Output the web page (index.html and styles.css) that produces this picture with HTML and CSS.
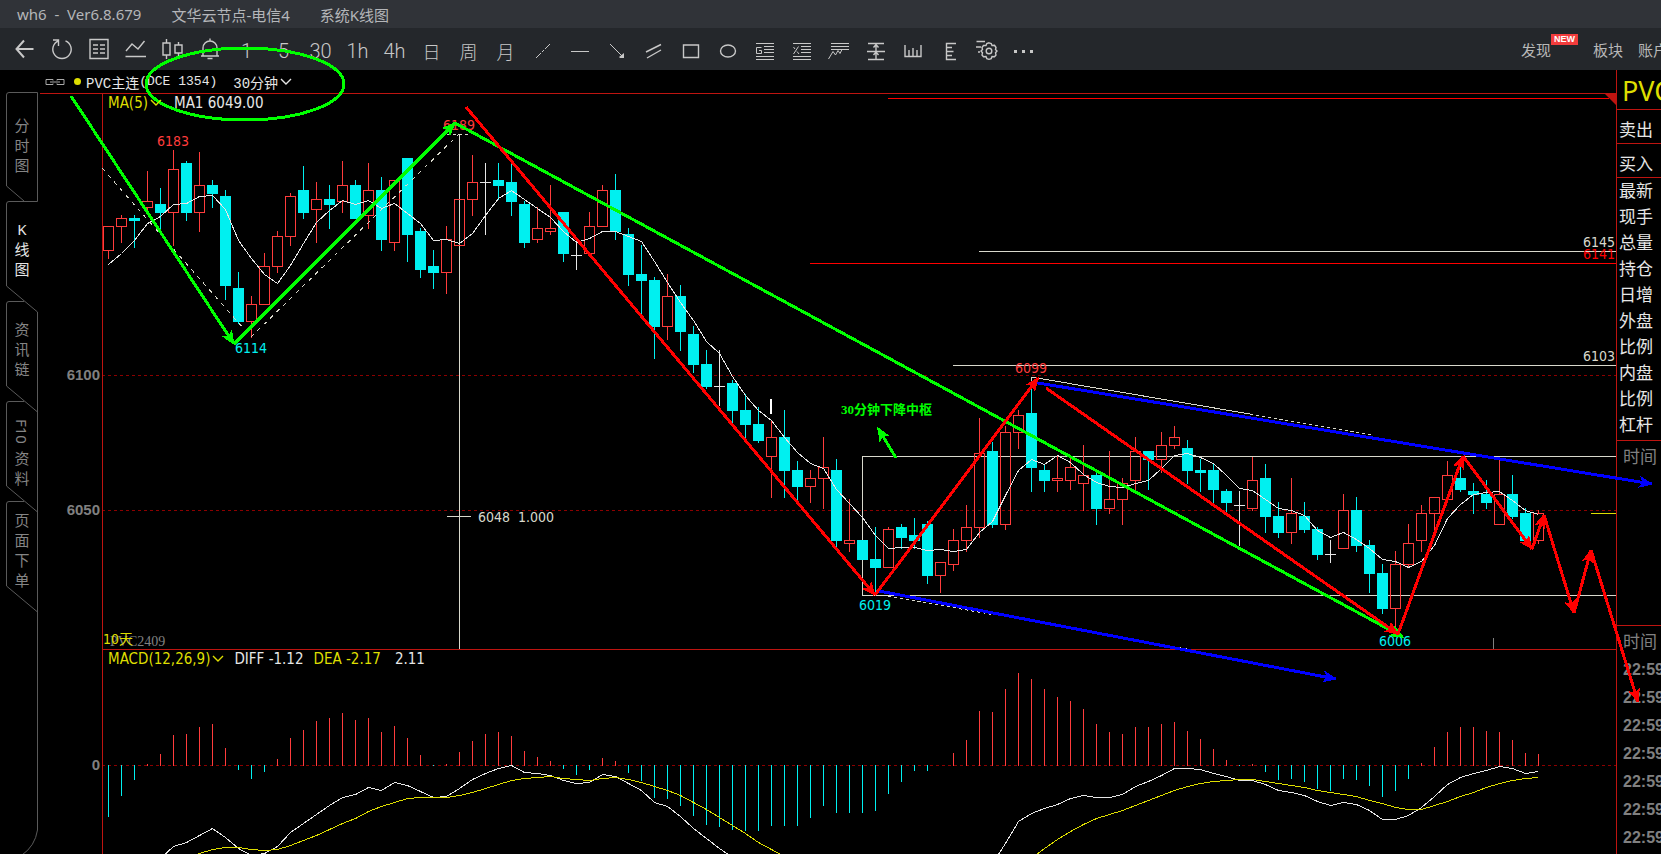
FILE: index.html
```html
<!DOCTYPE html>
<html lang="zh-CN">
<head>
<meta charset="utf-8">
<title>wh6 - Ver6.8.679</title>
<link rel="stylesheet" href="styles.css">
</head>
<body>
<header class="titlebar">
  <span>wh6&nbsp; -&nbsp; Ver6.8.679</span>
  <span>文华云节点-电信4</span>
  <span>系统K线图</span>
</header>

<div class="toolbar">
  <div class="tools">
    <button class="tool" aria-label="返回"><svg class="icon icon-bold icon-up" viewBox="0 0 24 24"><path d="M20.500 12H3.500M11 3.500L3.500 12L11 20.500"/></svg></button>
    <button class="tool" aria-label="刷新"><svg class="icon icon-mid icon-up" viewBox="0 0 24 24"><path d="M15.500 3.800A9.200 9.200 0 1 1 8.500 3.800M3 3H8.500V9"/></svg></button>
    <button class="tool" aria-label="报价"><svg class="icon icon-mid icon-up" viewBox="0 0 24 24"><path d="M3 2.500H21V21.500H3ZM6 8H11M13 8H18M6 12H11M13 12H18M6 16H11M13 16H18"/></svg></button>
    <button class="tool" aria-label="分时"><svg class="icon icon-mid icon-up" viewBox="0 0 24 24"><path d="M2 14L8 7L14 12L20.500 4M1.500 19.500H22"/></svg></button>
    <button class="tool" aria-label="K线"><svg class="icon icon-mid icon-up" viewBox="0 0 24 24"><path d="M2 6H9V18H2ZM5.500 2V6M5.500 18V22M14 8H21V16H14ZM17.500 5V8M17.500 16V20"/></svg></button>
    <button class="tool" aria-label="预警"><svg class="icon icon-mid icon-up" viewBox="0 0 24 24"><path d="M3 19H21M5 19V11A7 7 0 0 1 19 11V19M12 4V1.500M9.500 21.500H14.500"/></svg></button>
    <button class="tool">1</button>
    <button class="tool">5</button>
    <button class="tool">30</button>
    <button class="tool">1h</button>
    <button class="tool">4h</button>
    <button class="tool tool-cjk">日</button>
    <button class="tool tool-cjk">周</button>
    <button class="tool tool-cjk">月</button>
    <button class="tool" aria-label="线段"><svg class="icon" viewBox="0 0 24 24"><path d="M5 19L10 14M11 13L13 11M14 10L19 5"/></svg></button>
    <button class="tool" aria-label="水平线"><svg class="icon" viewBox="0 0 24 24"><path d="M3 12.500H21"/></svg></button>
    <button class="tool" aria-label="箭头"><svg class="icon" viewBox="0 0 24 24"><path d="M5 5L17 17"/><path class="solid" d="M14 18L19 14V19H15Z"/></svg></button>
    <button class="tool" aria-label="平行线"><svg class="icon icon-mid" viewBox="0 0 24 24"><path d="M4 13L19 5.500M5 19L19 11"/></svg></button>
    <button class="tool" aria-label="矩形"><svg class="icon icon-mid" viewBox="0 0 24 24"><path d="M4.500 6H19.500V18.500H4.500Z"/></svg></button>
    <button class="tool" aria-label="椭圆"><svg class="icon icon-mid" viewBox="0 0 24 24"><ellipse cx="12" cy="12" rx="7.500" ry="6"/></svg></button>
    <button class="tool" aria-label="黄金分割"><svg class="icon" viewBox="0 0 24 24"><path d="M3 4.500H21M11 7.500H21M11 10.500H21M11 13.500H21M3 17.500H21M3 20.500H21M8.500 8.500H3.500V14.500H8.500V11.500H6"/></svg></button>
    <button class="tool" aria-label="百分比"><svg class="icon" viewBox="0 0 24 24"><path d="M3 4.500H21M11 7.500H21M11 10.500H21M11 13.500H21M3 17.500H21M3 20.500H21M8.500 7.500L3.500 15M3.500 8L5 10M7 12.500L9 15"/></svg></button>
    <button class="tool" aria-label="波段"><svg class="icon" viewBox="0 0 24 24"><path d="M4 4.500H22M4 7.500H22M4 10.500H22M1.500 20L6 12.500L8.500 16L11 11.500L13 14.500L15 10.500"/></svg></button>
    <button class="tool" aria-label="对称线"><svg class="icon icon-mid" viewBox="0 0 24 24"><path d="M4 4.500H20M3 12.500H21M4 20.500H20M12 4V20M9.500 8.500L12 5.500L14.500 8.500M9.500 16L12 13L14.500 16"/></svg></button>
    <button class="tool" aria-label="周期线"><svg class="icon icon-mid" viewBox="0 0 24 24"><path d="M4 6V17.500H20V6M8 11V17M12 9V17M16 11V17"/></svg></button>
    <button class="tool" aria-label="测量"><svg class="icon icon-mid" viewBox="0 0 24 24"><path d="M18 4.500H8.500V20.500H18M8 8.500H14M8 12.500H15.500M8 16.500H14"/></svg></button>
    <button class="tool" aria-label="画线设置"><svg class="icon icon-mid" viewBox="0 0 24 24"><path d="M1.500 2.500H10M1 8H6M3 13H5"/><circle cx="14" cy="12" r="2.800"/><path d="M14 3.800L16.200 4.500L17 6.500L19.500 6.300L21 8.500L20.500 10.500L22 12L20.500 13.800L21 16L19.500 17.800L17 17.600L16.200 19.600L14 20.300L11.800 19.600L11 17.600L8.500 17.800L7 16L7.500 13.800L6 12L7.500 10.500L7 8.500L8.500 6.500L11 6.500L11.800 4.500Z"/></svg></button>
    <button class="tool" aria-label="更多"><svg class="icon" viewBox="0 0 24 24"><path class="solid" d="M2 11H5V14H2ZM10 11H13V14H10ZM18 11H21V14H18Z"/></svg></button>
  </div>
  <div class="menu">
    <a href="#discover" class="menu-new">发现<b class="badge">NEW</b></a>
    <a href="#sectors">板块</a>
    <a href="#account">账户</a>
  </div>
</div>

<main class="workspace">
  <nav class="tabs">
    <svg class="tabs-frame" viewBox="0 70 38 784">
      <path d="M37.500 92.500H9Q6.500 92.500 6.500 95V186L24 201M37.500 92.500V201.500H9Q6.500 201.500 6.500 204V286L37.500 312M24 301.500H9Q6.500 301.500 6.500 304V386L37.500 412M24 401.500H9Q6.500 401.500 6.500 404V486L37.500 512M24 501.500H9Q6.500 501.500 6.500 504V586L37.500 612M37.500 312V830Q35 846 22 855"/>
    </svg>
    <button class="tab tab-first"><span>分</span><span>时</span><span>图</span></button>
    <button class="tab tab-active"><span>K</span><span>线</span><span>图</span></button>
    <button class="tab"><span>资</span><span>讯</span><span>链</span></button>
    <button class="tab"><span class="sideways">F10</span><span>资</span><span>料</span></button>
    <button class="tab tab-high"><span>页</span><span>面</span><span>下</span><span>单</span></button>
  </nav>

  <section class="chart">
    <div class="chart-head">
      <svg class="link-icon" viewBox="0 0 20 8"><path d="M8 5.500V6.500H1V1.500H8V2.500M12 2.500V1.500H19V6.500H12V5.500M5 4H15"/></svg>
      <span class="dot"></span>
      <span>PVC主连</span>
      <span class="exchange">(DCE 1354)</span>
      <button class="period">30分钟<svg class="chevron" viewBox="0 0 12 8"><path d="M1 1L6 6L11 1"/></svg></button>
    </div>
    <div class="plot">
      <svg class="canvas" id="canvas" viewBox="38 93 1578 761"></svg>
      <div class="legend legend-price">
        <button class="gold">MA(5)<svg class="chevron" viewBox="0 0 12 8"><path d="M1 1L6 6L11 1"/></svg></button>
        <span>MA1 6049.00</span>
      </div>
      <div class="legend legend-macd">
        <button class="gold">MACD(12,26,9)<svg class="chevron" viewBox="0 0 12 8"><path d="M1 1L6 6L11 1"/></svg></button>
        <span>DIFF -1.12</span>
        <span class="gold">DEA -2.17</span>
        <span class="hist">2.11</span>
      </div>
    </div>
  </section>

  <aside class="quote">
    <h1 class="symbol">PVC主连</h1>
    <div class="side">卖出</div>
    <div class="side">买入</div>
    <ul class="facts">
      <li>最新</li><li>现手</li><li>总量</li><li>持仓</li><li>日增</li><li>外盘</li><li>比例</li><li>内盘</li><li>比例</li><li>杠杆</li>
    </ul>
    <div class="ticks-title ticks-empty">时间</div>
    <div class="ticks-title">时间</div>
    <ul class="ticks">
      <li>22:59</li><li>22:59</li><li>22:59</li><li>22:59</li><li>22:59</li><li>22:59</li><li>22:59</li>
    </ul>
  </aside>
</main>
<script src="chart.js"></script>
</body>
</html>
```
FILE: styles.css
```css
* { box-sizing: border-box; }

body {
  margin: 0;
  height: 100vh;
  overflow: hidden;
  display: flex;
  flex-direction: column;
  background: #000;
  color: #e6e6e6;
  font-family: "Noto Sans", "Noto Sans CJK SC", sans-serif;
  font-size: 15px;
}

button {
  padding: 0;
  border: 0;
  background: none;
  color: inherit;
  font: inherit;
}

ul { margin: 0; padding: 0; list-style: none; }

svg { display: block; fill: none; stroke: currentColor; }

.titlebar {
  flex: none;
  height: 28px;
  display: flex;
  align-items: center;
  gap: 30px;
  padding-left: 17px;
  background: #303338;
  color: #b4b6b9;
  font-size: 15px;
  white-space: nowrap;
}

.toolbar {
  flex: none;
  height: 42px;
  display: flex;
  justify-content: space-between;
  background: #24272b;
  color: #c8c8c8;
}

.tools { display: flex; padding-left: 6px; }

.tool {
  width: 37px;
  display: flex;
  align-items: center;
  justify-content: center;
  padding-top: 4px;
  font: 300 20px/1 Roboto, sans-serif;
}

.tool-cjk { font: 300 18px/1 "Noto Sans CJK SC", sans-serif; }

.icon { width: 24px; height: 24px; stroke-width: 1; flex: none; }
.icon-mid { stroke-width: 1.4; }
.icon-bold { stroke-width: 2; }
.icon-up { margin-bottom: 4px; }
.solid { fill: currentColor; stroke: none; }

.menu {
  flex: none;
  width: 140px;
  display: flex;
  align-items: center;
  overflow: hidden;
  white-space: nowrap;
}

.menu a { margin-right: 15px; color: #b8b8b8; text-decoration: none; }
.menu .menu-new { display: flex; }

.badge {
  width: 27px;
  height: 11px;
  margin-top: -5px;
  background: #f23c3c;
  color: #fff;
  font: bold 9px/11px "Liberation Sans", sans-serif;
  text-align: center;
}

.workspace {
  flex: 1;
  min-height: 0;
  display: grid;
  grid-template-columns: 38px minmax(0, 1fr) 45px;
}

.tabs {
  position: relative;
  display: flex;
  flex-direction: column;
  padding-top: 31px;
}

.tabs-frame {
  position: absolute;
  top: 0;
  left: 0;
  width: 38px;
  stroke: #5a5a5a;
}

.tab {
  position: relative;
  height: 100px;
  display: flex;
  flex-direction: column;
  align-items: center;
  padding: 18px 0 0 6px;
  color: #858585;
  font-size: 15px;
  line-height: 20px;
}

.tab-first { padding-top: 14px; }
.tab-active { color: #e6e6e6; }
.tab-high { padding-top: 9px; }
.sideways { margin-bottom: 4px; writing-mode: vertical-rl; line-height: 16px; }

.chart { min-width: 0; }

.chart-head {
  height: 23px;
  display: flex;
  align-items: center;
  padding-left: 7px;
  font-family: "Liberation Mono", "Noto Sans CJK SC", monospace;
  font-size: 14px;
  white-space: nowrap;
}

.link-icon { width: 20px; height: 8px; color: #aaa; }

.dot {
  width: 7px;
  height: 7px;
  margin: 0 5px 0 9px;
  border-radius: 50%;
  background: #dede00;
}

.exchange { margin-right: 16px; font-size: 13px; }

.period, .legend button { display: flex; align-items: center; gap: 2px; }

.chevron { width: 12px; height: 8px; stroke-width: 1.4; }

.plot { position: relative; z-index: 1; }

.canvas { width: 100%; overflow: visible; stroke: none; }

.legend {
  position: absolute;
  left: 70px;
  display: flex;
  line-height: 20px;
  font-family: "DejaVu Sans Condensed", "Noto Sans CJK SC", sans-serif;
  font-size: 15px;
  white-space: nowrap;
}

.legend-price { top: 0; gap: 12px; }
.legend-macd { top: 556px; gap: 10px; }
.gold { color: #dede00; }
.hist { margin-left: 4px; }

.frame { stroke: #be1410; shape-rendering: crispEdges; }
.frame-fill { fill: #be1410; }
.grid { stroke: #8c0000; stroke-dasharray: 3 3; shape-rendering: crispEdges; }
.red { stroke: #ff0000; }
.pale { stroke: #d8d8cc; }
.gray { stroke: #808080; }
.yellow { stroke: #dede00; }
.crisp { shape-rendering: crispEdges; }
.dashed { stroke-dasharray: 4 5; }
.dotted { stroke-dasharray: 3 3; }
.thick { stroke: #fff; stroke-width: 2; }

.up { stroke: #ff3c3c; shape-rendering: crispEdges; }
.down { stroke: #00f0f0; fill: #00f0f0; shape-rendering: crispEdges; }
.flat { stroke: #e6e6e6; shape-rendering: crispEdges; }
.average { stroke: #e6e6e6; }

.arrow-green { stroke: #00ff00; fill: #00ff00; }
.arrow-red { stroke: #ff0000; fill: #ff0000; }
.arrow-blue { stroke: #0000ff; fill: #0000ff; }
.crisp.shaft { stroke-width: 3; fill: none; }
.ring { stroke: #00ff00; stroke-width: 3; }

.label { font: 14px "DejaVu Sans Condensed", "Noto Sans CJK SC", sans-serif; }
.label-end { text-anchor: end; }
.label-axis { font: bold 15px "Liberation Sans", sans-serif; text-anchor: end; fill: #808080; }
.label-note { font: bold 13px "Liberation Serif", "Noto Sans CJK SC", serif; fill: #00ff00; }
.label-contract { font: 14px "Liberation Serif", serif; fill: #808080; }
.t-up { fill: #ff3c3c; }
.t-red { fill: #ff0000; }
.t-down { fill: #00f0f0; }
.t-pale { fill: #d8d8cc; }
.t-gold { fill: #dede00; }

.quote {
  overflow: hidden;
  border-left: 1px solid #be1410;
  font-size: 17px;
  white-space: nowrap;
}

.symbol {
  height: 40px;
  margin: 0;
  padding-left: 5px;
  border-bottom: 1px solid #be1410;
  color: #dede00;
  font-size: 27px;
  font-weight: 400;
  line-height: 42px;
}

.side {
  height: 34px;
  padding: 3px 0 0 2px;
  border-bottom: 1px solid #be1410;
  line-height: 34px;
}

.facts {
  height: 263px;
  padding-left: 2px;
  border-bottom: 1px solid #be1410;
  line-height: 26px;
}

.ticks-title { height: 30px; padding-left: 6px; color: #808080; line-height: 32px; }
.ticks-empty { height: 185px; border-bottom: 1px solid #be1410; }

.ticks {
  padding-left: 6px;
  color: #808080;
  font: bold 16px/28px "Liberation Sans", sans-serif;
}
```
FILE: chart.js
```js
// Each candle: kind (r rising, c falling, w unchanged), high, body top, body bottom, low.
const candles = `
r 226 226 251 259|r 215 218 227 243|c 215 218 221 248|r 171 201 208 210|c 188 204 213 231
r 150 169 213 246|c 161 163 213 221|r 152 185 213 232|c 180 185 194 208|c 190 196 286 300
c 272 288 322 324|r 296 304 322 338|r 253 266 305 305|r 231 236 267 273|r 193 196 237 246
c 166 190 213 219|r 182 199 210 243|c 185 199 205 229|r 161 185 202 213|c 180 185 219 219
r 163 190 216 229|c 177 190 240 251|r 180 180 243 251|c 158 158 235 262|c 228 231 270 278
c 250 266 273 289|r 226 239 273 294|r 199 199 246 246|r 155 182 200 216|w 163 182 183 235
c 163 180 186 200|c 164 182 202 216|c 201 204 243 248|r 207 228 240 243|r 185 228 232 235
c 212 212 254 262|w 241 255 256 270|r 212 226 254 254|r 185 190 227 227|c 174 190 232 240
c 228 234 275 286|c 245 274 281 315|c 277 280 327 359|r 274 296 327 340|c 285 296 332 351
c 326 334 365 373|c 350 364 387 389|w 350 386 387 406|c 380 383 411 423|c 394 410 425 438
c 407 424 441 443|r 421 437 457 498|c 410 437 471 498|c 461 470 487 501|r 470 478 487 503
r 437 467 479 509|c 459 470 541 548|r 499 540 544 552|c 540 540 560 560|c 527 559 568 595
r 527 529 568 568|c 524 527 538 549|c 518 535 541 549|c 521 524 576 584|r 562 562 576 593
r 529 540 565 571|r 505 527 541 552|r 418 453 528 538|c 442 451 525 528|r 426 432 525 530
r 410 415 433 449|c 377 413 468 492|c 464 470 481 492|r 455 478 481 492|r 458 467 481 490
r 445 475 484 511|c 472 475 509 525|r 451 499 509 514|r 478 483 500 525|r 437 451 481 492
c 451 451 460 490|r 432 445 460 473|r 426 437 446 449|c 440 448 471 484|c 459 470 473 492
c 464 470 490 504|c 489 491 503 512|w 491 505 506 546|r 457 480 509 511|c 464 478 517 533
c 502 516 533 538|r 478 513 533 544|c 502 516 530 533|c 527 529 555 560|w 540 554 555 563
r 494 510 549 549|c 497 510 546 552|c 540 545 574 593|c 564 573 609 614|r 551 564 609 630
r 524 543 565 568|r 505 513 541 552|r 497 497 514 530|r 461 475 500 500|c 462 478 490 492
c 483 491 495 514|c 480 494 503 509|r 460 494 525 525|c 475 494 517 519|c 508 513 541 541
r 510 513 541 544`.trim().split(/[|\n]/).map(row => {
  const [kind, ...levels] = row.split(" ");
  return [kind, ...levels.map(Number)];
});

const histogram = [
  -52, -31, -15, 1, 11, 30, 31, 38, 41, 17, -5, -14, -7, 6, 27, 35, 44, 47, 52, 45, 47, 33, 39, 27, 10, -1, 1, 13,
  24, 31, 33, 29, 14, 8, 4, -4, -10, -5, 7, 4, -8, -16, -33, -34, -41, -51, -60, -62, -65, -66, -66, -61, -61, -61,
  -53, -41, -48, -48, -48, -46, -29, -17, -6, -6, 0, 12, 25, 54, 53, 76, 92, 86, 76, 68, 64, 56, 41, 33, 31, 38, 38,
  41, 43, 34, 26, 16, 5, -1, 1, -7, -15, -14, -17, -24, -26, -14, -15, -21, -32, -26, -14, 2, 18, 33, 38, 38, 34,
  33, 25, 12, 11
];

// Indicator lines as [first candle index, y values].
const diff = [
  [4, [858, 846, 842, 835, 828, 837, 848, 855, 853, 846, 832, 823, 814, 805, 797, 794, 787, 790, 782, 785, 791, 797,
    796, 788, 779, 773, 768, 765, 772, 773, 775, 780, 783, 782, 774, 776, 783, 790, 802, 806, 816, 828, 838, 848, 857]],
  [68, [863, 843, 821, 813, 808, 804, 798, 795, 797, 797, 794, 786, 781, 775, 768, 768, 769, 773, 776, 780, 780, 784,
    790, 792, 795, 801, 805, 802, 804, 810, 819, 819, 815, 807, 796, 784, 777, 773, 770, 766, 768, 773, 771]]
];
const dea = [
  [6, [860, 853, 849, 847, 847, 849, 850, 849, 845, 840, 835, 829, 823, 818, 811, 806, 802, 798, 797, 797, 797, 795,
    792, 788, 784, 780, 778, 777, 776, 778, 779, 780, 778, 777, 779, 782, 786, 790, 795, 802, 809, 817, 825, 833,
    842, 849, 856]],
  [71, [858, 848, 839, 831, 824, 818, 814, 810, 805, 800, 795, 790, 786, 783, 781, 780, 779, 779, 781, 783, 785, 787,
    790, 792, 794, 796, 800, 803, 807, 809, 809, 805, 801, 796, 792, 787, 783, 780, 778, 777]]
];

const parts = [];
const centre = i => 108.5 + 13 * i;
const path = (cls, d) => parts.push(`<path class="${cls}" d="${d}"/>`);
const text = (cls, x, y, value) => parts.push(`<text class="${cls}" x="${x}" y="${y}">${value}</text>`);
const curve = (cls, start, ys) =>
  path(cls, "M" + ys.map((y, i) => `${centre(start + i)} ${y + 0.5}`).join("L"));

// Grid and pane borders
[375.5, 510.5, 765.5].forEach(y => path("grid", `M102 ${y}H1616`));
path("frame", "M40 93.5H1616M102.5 93V854M102 649.5H1616");
path("frame-fill", "M1604 93H1616V105Z");

// Horizontal levels, range box and crosshair
path("crisp red", "M888 98.5H1609M810 263.5H1616");
path("crisp pale", "M979 251.5H1616M953 365.5H1616M1616 456.5H862.5V595.5H1616");
path("crisp pale", "M459.5 134V649M447 516.5H471");
path("crisp pale dotted", "M447 134.5H469");
path("crisp yellow", "M1591 513.5H1616");
path("crisp gray", "M1493.5 638V649");
path("crisp thick", "M771 399V414");

// Candles
candles.forEach(([kind, high, top, bottom, low], i) => {
  const x = centre(i);
  if (kind === "w") {
    path("flat", `M${x} ${high}V${low}M${x - 5.5} ${top + 0.5}H${x + 5.5}`);
    return;
  }
  path(kind === "r" ? "up" : "down",
    `M${x} ${high}V${top}M${x} ${bottom}V${low}M${x - 5} ${top + 0.5}H${x + 5}V${bottom - 0.5}H${x - 5}Z`);
});

// Five-period average of the closes
const closes = candles.map(([kind, , top, bottom]) => (kind === "c" ? bottom : top));
const average = closes.map((_, i) =>
  i < 4 ? [264, 253, 240, 223][i] : Math.round(closes.slice(i - 4, i + 1).reduce((a, b) => a + b) / 5));
curve("average crisp", 0, average);

// MACD pane
histogram.forEach((h, i) => {
  if (h) path(h > 0 ? "up" : "down", `M${centre(i)} ${h > 0 ? 766 : 765}V${765 - h}`);
});
diff.forEach(([start, ys]) => curve("average crisp", start, ys));
dea.forEach(([start, ys]) => curve("yellow crisp", start, ys));

// Labels
text("label t-up", 157, 146, "6183");
text("label t-up", 443, 130, "6189");
text("label t-up", 1015, 373, "6099");
text("label t-down", 235, 353, "6114");
text("label t-down", 859, 610, "6019");
text("label t-down", 1379, 646, "6006");
text("label label-end t-pale", 1615, 247, "6145");
text("label label-end t-red", 1615, 259, "6141");
text("label label-end t-pale", 1615, 361, "6103");
text("label t-pale", 478, 522, "6048&#160; 1.000");
text("label-axis", 100, 380, "6100");
text("label-axis", 100, 515, "6050");
text("label-axis", 100, 770, "0");
text("label-contract", 110, 646, "PVC2409");
text("label t-gold", 103, 644, "10天");
text("label-note", 841, 414, "30分钟下降中枢");

// Trend lines and drawn arrows
path("pale crisp dashed", "M102 168L251 337L459 134");
path("pale crisp", "M1031.5 381V377.5H1034L1250 414");
path("pale crisp dotted", "M1250 414L1372 435M888 596L995 615M1172 646L1187 649");

function arrow(color, x1, y1, x2, y2) {
  const angle = Math.atan2(y2 - y1, x2 - x1);
  const at = (back, side) => [
    x2 - back * Math.cos(angle) - side * Math.sin(angle),
    y2 - back * Math.sin(angle) + side * Math.cos(angle)
  ].join(" ");
  path(`arrow-${color} crisp shaft`, `M${x1} ${y1}L${x2} ${y2}`);
  path(`arrow-${color} crisp`, `M${at(0, 0)}L${at(12, 5)}L${at(9, 0)}L${at(12, -5)}Z`);
}
[
  ["green", 71, 96, 234, 344], ["green", 234, 344, 455, 123], ["green", 455, 123, 1403, 637],
  ["green", 896, 458, 878, 428],
  ["blue", 1032, 382, 1652, 484], ["blue", 879, 591, 1336, 679],
  ["red", 466, 107, 875, 595], ["red", 875, 595, 1038, 378], ["red", 1046, 388, 1398, 634],
  ["red", 1398, 634, 1463, 456], ["red", 1463, 456, 1532, 549], ["red", 1532, 549, 1544, 515],
  ["red", 1544, 515, 1574, 613], ["red", 1574, 613, 1591, 550], ["red", 1591, 550, 1638, 702]
].forEach(line => arrow(...line));
parts.push('<ellipse class="ring crisp" cx="245" cy="84" rx="99" ry="36"/>');

document.getElementById("canvas").innerHTML = parts.join("");
```
